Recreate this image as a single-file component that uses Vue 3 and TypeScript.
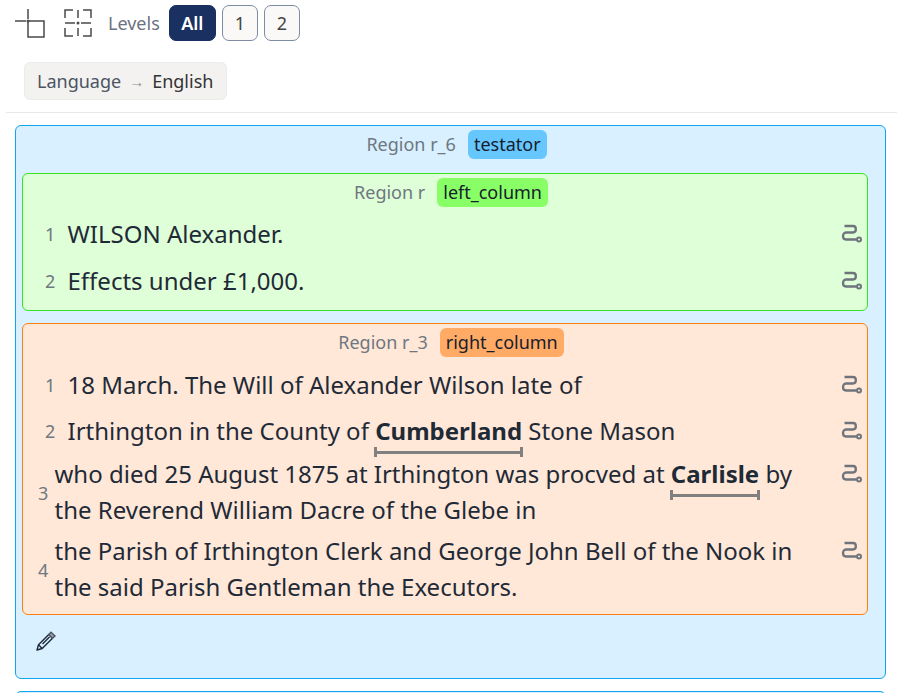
<script setup lang="ts">
interface Line {
  no: number
  parts: { text: string; bold?: boolean }[]
  wrapped?: boolean
}

const levels = ['All', '1', '2']

const leftLines: Line[] = [
  { no: 1, parts: [{ text: 'WILSON Alexander.' }] },
  { no: 2, parts: [{ text: 'Effects under £1,000.' }] },
]

const rightLines: Line[] = [
  { no: 1, parts: [{ text: '18 March. The Will of Alexander Wilson late of' }] },
  {
    no: 2,
    parts: [
      { text: 'Irthington in the County of ' },
      { text: 'Cumberland', bold: true },
      { text: ' Stone Mason' },
    ],
  },
  {
    no: 3,
    wrapped: true,
    parts: [
      { text: 'who died 25 August 1875 at Irthington was procved at ' },
      { text: 'Carlisle', bold: true },
      { text: ' by the Reverend William Dacre of the Glebe in' },
    ],
  },
  {
    no: 4,
    wrapped: true,
    parts: [
      {
        text: 'the Parish of Irthington Clerk and George John Bell of the Nook in the said Parish Gentleman the Executors.',
      },
    ],
  },
]

const regions = [
  { id: 'Region r', tag: 'left_column', kind: 'green', lines: leftLines },
  { id: 'Region r_3', tag: 'right_column', kind: 'orange', lines: rightLines },
]
</script>

<template>
  <div class="page">
    <div class="toolbar">
      <button class="icon-btn" aria-label="Collapse">
        <svg width="32" height="32" viewBox="0 0 32 32" fill="none" stroke="#4a4a4a" stroke-width="1.5">
          <path d="M14 2V12M1 14H12M14 14H30V30H14Z" />
          <circle cx="14" cy="14" r="1.5" fill="#4a4a4a" stroke="none" />
        </svg>
      </button>
      <button class="icon-btn" aria-label="Expand">
        <svg width="32" height="32" viewBox="0 0 32 32" fill="none" stroke="#4a4a4a" stroke-width="1.5">
          <path d="M5 11V3H13M23 3H31V11M5 21V29H13M23 29H31V21" />
          <path d="M18 3V11M18 21V29M5 16H15M21 16H31" />
          <circle cx="18" cy="16" r="1.500" fill="#4a4a4a" stroke="none" />
        </svg>
      </button>
      <span class="levels-label">Levels</span>
      <button
        v-for="(level, i) in levels"
        :key="level"
        class="level-btn"
        :class="{ active: i === 0 }"
      >
        {{ level }}
      </button>
    </div>

    <div class="chip-row">
      <div class="chip">
        <span class="chip-key">Language</span>
        <span class="chip-arrow">→</span>
        <span class="chip-value">English</span>
      </div>
    </div>

    <div class="regions">
      <section class="region blue">
        <header class="region-head">
          <span class="region-id">Region r_6</span>
          <span class="region-tag tag-blue">testator</span>
        </header>

        <section v-for="region in regions" :key="region.id" class="region inner" :class="region.kind">
          <header class="region-head">
            <span class="region-id">{{ region.id }}</span>
            <span class="region-tag" :class="'tag-' + region.kind">{{ region.tag }}</span>
          </header>
          <div
            v-for="line in region.lines"
            :key="line.no"
            class="line"
            :class="{ wrapped: line.wrapped }"
          >
            <span class="line-no">{{ line.no }}</span>
            <p class="line-text">
              <template v-for="part in line.parts" :key="part.text">
                <strong v-if="part.bold" class="entity">{{ part.text }}</strong>
                <template v-else>{{ part.text }}</template>
              </template>
            </p>
            <svg class="line-icon" width="22" height="22" viewBox="0 0 22 22" fill="none" stroke="#6f747c" stroke-width="2.300">
              <path d="M4.500 3H13C16.800 3 16.800 9.500 13 9.500H6C2 9.500 2 16.500 6 16.500H16.500" />
              <circle cx="19" cy="16.500" r="2" stroke-width="2" />
            </svg>
          </div>
        </section>

        <button class="edit-btn" aria-label="Edit">
          <svg width="22" height="22" viewBox="0 0 22 22" fill="none" stroke="#1f2937" stroke-width="1.400">
            <path d="M2 20L3.500 14.800L13.800 4.500L17.500 8.200L7.200 18.500Z" stroke-linejoin="round" />
            <path d="M13.800 4.500L16 2.200L20 6L17.500 8.200Z" fill="#9aa0a6" stroke="#4b5563" />
            <path d="M3.500 14.800L7.200 18.500M7.500 14L14.500 7" />
          </svg>
        </button>
      </section>

      <section class="region blue next"></section>
    </div>
  </div>
</template>

<style>
html,
body {
  margin: 0;
  height: 100%;
  overflow: hidden;
  background: #fff;
}
</style>

<style scoped>
.page {
  font-family: 'Noto Sans', sans-serif;
  color: #1f2a37;
  height: 693px;
  overflow: hidden;
}

.toolbar {
  display: flex;
  align-items: center;
  height: 36px;
  padding: 5px 0 0 14px;
}

.icon-btn {
  border: 0;
  background: none;
  padding: 0;
  width: 32px;
  height: 36px;
  margin-right: 14px;
  display: flex;
  align-items: center;
}

.levels-label {
  font-size: 18px;
  color: #6b7280;
  margin: 0 9px 0 2px;
}

.level-btn {
  font-family: inherit;
  font-size: 18px;
  height: 36px;
  min-width: 36px;
  padding: 0;
  margin-right: 6px;
  border-radius: 7px;
  border: 1px solid #7d8ba3;
  background: #faf9f7;
  color: #444;
}

.level-btn.active {
  background: #1a3061;
  border-color: #1a3061;
  color: #fff;
  font-weight: 600;
  min-width: 47px;
}

.chip-row {
  padding: 21px 0 12px 18px;
  margin-left: 6px;
  border-bottom: 1px solid #e8e8e8;
}

.chip {
  display: inline-flex;
  align-items: center;
  gap: 8px;
  height: 36px;
  padding: 0 13px 0 12px;
  border: 1px solid #ececea;
  border-radius: 6px;
  background: #f3f2f0;
  font-size: 18px;
}

.chip-key {
  color: #4b5563;
}

.chip-arrow {
  color: #8a8f96;
  font-size: 15px;
}

.chip-value {
  color: #333;
}

.regions {
  padding: 12px 11px 0 15px;
}

.region {
  border: 1px solid;
  border-radius: 6px;
  padding: 6px;
}

.region.blue {
  height: 540px;
  background: #d8f0ff;
  border-color: #12a5ee;
}

.region.next {
  margin-top: 12px;
}

.region.inner {
  height: auto;
  margin: 0 11px 12px 0;
  padding: 0 0 6px;
}

.region.green {
  background: #dfffd8;
  border-color: #33e61f;
}

.region.orange {
  background: #ffe8d8;
  border-color: #ff7f0e;
}

.region-head {
  display: flex;
  justify-content: center;
  align-items: center;
  gap: 12px;
  height: 36px;
  padding-left: 12px;
}

.region.orange > .region-head {
  margin-bottom: 2px;
}

.region.blue > .region-head {
  height: 24px;
  margin-bottom: 17px;
}

.region-id {
  font-size: 18px;
  color: #6f7780;
}

.region-tag {
  font-size: 18px;
  line-height: 29px;
  padding: 0 6px;
  border-radius: 6px;
  color: #16202c;
}

.tag-blue {
  background: #66c7ff;
}

.tag-green {
  background: #88ff66;
}

.tag-orange {
  background: #ffab66;
}

.line {
  display: flex;
  align-items: center;
  min-height: 47px;
  padding: 0 5px 0 22px;
}

.orange .line {
  min-height: 46px;
}

.line-no {
  font-size: 18px;
  color: #6f7780;
  width: 23px;
  flex: none;
}

.line-text {
  margin: 0 0 0 -0.5px;
  flex: 1;
  font-size: 24px;
  line-height: 36px;
}

.orange .line.wrapped {
  padding-left: 15px;
  padding-bottom: 3px;
  min-height: 0;
  margin-top: 2px;
}

.line.wrapped .line-no {
  width: 17px;
  padding-top: 2px;
}

.line.wrapped .line-text {
  max-width: 768px;
}

.line.wrapped .line-icon {
  align-self: flex-start;
  margin-top: 7px;
}

.entity {
  font-weight: 700;
  display: inline-block;
  position: relative;
}

.entity::after {
  content: '';
  position: absolute;
  left: -1px;
  right: -1px;
  bottom: -8px;
  height: 10px;
  box-sizing: border-box;
  border: solid #808080;
  border-width: 0 3px;
  background: linear-gradient(#808080, #808080) 0 4px / 100% 3px no-repeat;
}

.line-icon {
  flex: none;
  margin-left: auto;
}

.edit-btn {
  border: 0;
  background: none;
  padding: 0;
  margin: 0 0 0 13px;
  height: 30px;
  display: block;
}
</style>
